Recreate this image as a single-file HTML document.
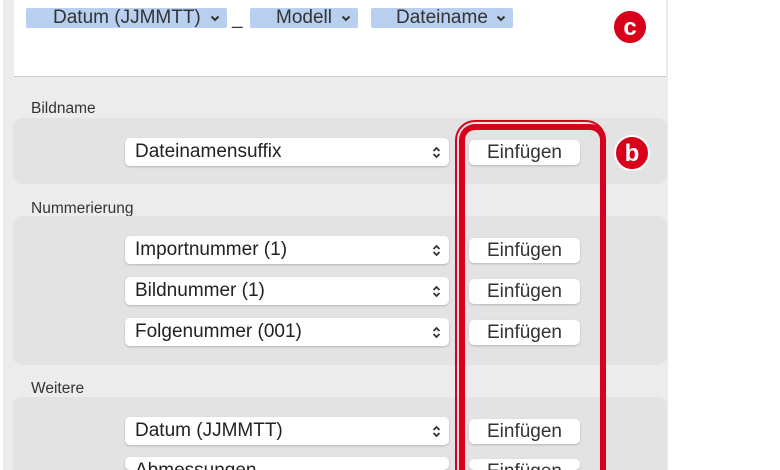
<!DOCTYPE html>
<html style="overflow:hidden;height:470px"><head><style>
html,body{margin:0;width:780px;height:470px;overflow:hidden;background:#fff;font-family:"Liberation Sans",sans-serif;position:relative}
.a{position:absolute}
.panel{left:3px;top:0;width:665px;height:470px;background:#ececec}
.tok{background:#b9cfef;height:20px;top:8px;font-size:19px;color:#333;line-height:20px;border-radius:2px}
.lab{font-size:15.5px;color:#333}
.grp{background:#e3e3e3;border-radius:9px;left:13px;width:654px}
.pop{left:125px;width:324px;height:28px;background:#fff;border-radius:5px;box-shadow:0 1px 2px rgba(0,0,0,.2);font-size:19px;color:#222;line-height:28px;text-indent:10px}
.btn{left:469px;width:111px;height:25px;background:#fff;border-radius:5px;box-shadow:0 1px 2px rgba(0,0,0,.2);font-size:19px;color:#333;line-height:25px;text-align:center}
.ud{position:absolute;right:8px;top:8px}
.dn{position:absolute;right:7px;top:7px}
.badge{width:36px;height:36px;border-radius:50%;background:#d9001b;color:#fff;font-weight:bold;font-size:24px;text-align:center;line-height:34px;border:2px solid #fff;box-sizing:border-box}
</style></head><body>
<div class="a panel"></div>
<div class="a" style="left:14px;top:0;width:652px;height:76px;background:#fff;border-bottom:1px solid #ccc"></div>
<div class="a tok" style="left:26px;width:201px"><span class="a" style="left:27px">Datum (JJMMTT)</span><svg class="dn" width="10" height="7" viewBox="0 0 10 7"><path d="M1.5 1.5L5 5L8.5 1.5" fill="none" stroke="#333" stroke-width="2"/></svg></div>
<div class="a" style="left:232px;top:8px;font-size:19px;color:#333">_</div>
<div class="a tok" style="left:250px;width:108px"><span class="a" style="left:26px">Modell</span><svg class="dn" width="10" height="7" viewBox="0 0 10 7"><path d="M1.5 1.5L5 5L8.5 1.5" fill="none" stroke="#333" stroke-width="2"/></svg></div>
<div class="a tok" style="left:371px;width:142px"><span class="a" style="left:25px">Dateiname</span><svg class="dn" width="10" height="7" viewBox="0 0 10 7"><path d="M1.5 1.5L5 5L8.5 1.5" fill="none" stroke="#333" stroke-width="2"/></svg></div>
<div class="a badge" style="left:612px;top:9px">c</div>

<div class="a lab" style="left:31px;top:100px">Bildname</div>
<div class="a grp" style="top:118px;height:66px"></div>
<div class="a pop" style="top:138px">Dateinamensuffix<svg class="ud" width="9" height="13" viewBox="0 0 9 13"><path d="M1.5 5L4.5 2L7.5 5M1.5 8L4.5 11L7.5 8" fill="none" stroke="#333" stroke-width="1.8"/></svg></div>
<div class="a btn" style="top:140px">Einfügen</div>

<div class="a lab" style="left:31px;top:200px">Nummerierung</div>
<div class="a grp" style="top:216px;height:149px"></div>
<div class="a pop" style="top:236px">Importnummer (1)<svg class="ud" width="9" height="13" viewBox="0 0 9 13"><path d="M1.5 5L4.5 2L7.5 5M1.5 8L4.5 11L7.5 8" fill="none" stroke="#333" stroke-width="1.8"/></svg></div>
<div class="a btn" style="top:238px">Einfügen</div>
<div class="a pop" style="top:277px">Bildnummer (1)<svg class="ud" width="9" height="13" viewBox="0 0 9 13"><path d="M1.5 5L4.5 2L7.5 5M1.5 8L4.5 11L7.5 8" fill="none" stroke="#333" stroke-width="1.8"/></svg></div>
<div class="a btn" style="top:279px">Einfügen</div>
<div class="a pop" style="top:318px">Folgenummer (001)<svg class="ud" width="9" height="13" viewBox="0 0 9 13"><path d="M1.5 5L4.5 2L7.5 5M1.5 8L4.5 11L7.5 8" fill="none" stroke="#333" stroke-width="1.8"/></svg></div>
<div class="a btn" style="top:320px">Einfügen</div>

<div class="a lab" style="left:31px;top:380px">Weitere</div>
<div class="a grp" style="top:397px;height:73px;border-radius:9px 9px 0 0"></div>
<div class="a pop" style="top:417px">Datum (JJMMTT)<svg class="ud" width="9" height="13" viewBox="0 0 9 13"><path d="M1.5 5L4.5 2L7.5 5M1.5 8L4.5 11L7.5 8" fill="none" stroke="#333" stroke-width="1.8"/></svg></div>
<div class="a btn" style="top:419px">Einfügen</div>
<div class="a pop" style="top:457px;height:13px;overflow:hidden">Abmessungen</div>
<div class="a btn" style="top:459px;height:11px;overflow:hidden">Einfügen</div>

<div class="a" style="left:455px;top:120px;width:147px;height:348px;border:2px solid #d9001b;border-bottom:none;border-radius:20px 20px 0 0"></div>
<div class="a" style="left:459px;top:124px;width:135px;height:340px;border:6px solid #d9001b;border-bottom:none;border-radius:16px 16px 0 0"></div>
<div class="a badge" style="left:614px;top:135px">b</div>
</body></html>
